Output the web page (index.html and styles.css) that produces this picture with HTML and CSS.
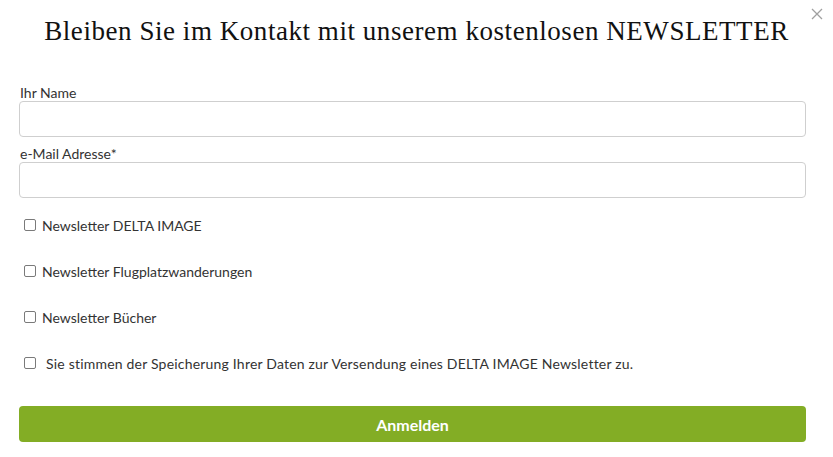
FILE: index.html
```html
<!DOCTYPE html>
<html lang="de">
<head>
<meta charset="utf-8">
<title>Newsletter</title>
<link rel="stylesheet" href="styles.css">
</head>
<body>
<div class="modal">
  <button class="close" type="button" aria-label="Schließen">
    <svg width="12" height="12" viewBox="0 0 12 12"><path d="M1 1L11 11M11 1L1 11" stroke="#a0a0a0" stroke-width="1.3" fill="none"/></svg>
  </button>
  <h1 class="title">Bleiben Sie im Kontakt mit unserem kostenlosen NEWSLETTER</h1>
  <form class="form">
    <div class="field">
      <label class="label" for="name">Ihr Name</label>
      <input class="input" id="name" type="text">
    </div>
    <div class="field">
      <label class="label" for="mail">e-Mail Adresse*</label>
      <input class="input" id="mail" type="email">
    </div>
    <div class="checks">
      <label class="check"><span class="box"></span><span>Newsletter DELTA IMAGE</span></label>
      <label class="check"><span class="box"></span><span>Newsletter Flugplatzwanderungen</span></label>
      <label class="check"><span class="box"></span><span>Newsletter Bücher</span></label>
      <label class="check consent"><span class="box"></span><span>Sie stimmen der Speicherung Ihrer Daten zur Versendung eines DELTA IMAGE Newsletter zu.</span></label>
    </div>
    <button class="submit" type="button">Anmelden</button>
  </form>
</div>
</body>
</html>
```
FILE: styles.css
```css
html, body {
  margin: 0;
  padding: 0;
  background: #fff;
}
.modal {
  position: relative;
  padding: 0 27px 0 19px;
  font-family: Lato, "Liberation Sans", sans-serif;
  color: #333;
}
.close {
  position: absolute;
  top: 7px;
  right: 10px;
  width: 13px;
  height: 13px;
  padding: 0;
  border: 0;
  background: none;
  display: flex;
  align-items: center;
  justify-content: center;
}
.title {
  margin: 0 0 0 8px;
  padding-top: 14px;
  height: 62px;
  box-sizing: border-box;
  font-family: "Liberation Serif", serif;
  font-weight: normal;
  font-size: 27px;
  line-height: 34px;
  color: #111;
  text-align: center;
  letter-spacing: 0.55px;
  white-space: nowrap;
}
.form {
  display: flex;
  flex-direction: column;
}
.field {
  display: flex;
  flex-direction: column;
  margin-top: 23px;
}
.field + .field {
  margin-top: 9px;
}
.label {
  font-size: 14px;
  line-height: 16px;
  height: 16px;
  margin-left: 1px;
  color: #333;
}
.input {
  height: 36px;
  box-sizing: border-box;
  border: 1px solid #cfcfcf;
  border-radius: 4px;
  margin: 0;
  padding: 0 10px;
  font: inherit;
}
.checks {
  display: flex;
  flex-direction: column;
  gap: 26px;
  margin-top: 17px;
}
.check {
  display: flex;
  align-items: center;
  height: 20px;
  padding-left: 5px;
  font-size: 14px;
  color: #333;
}
.box {
  width: 10px;
  height: 10px;
  border: 1.5px solid #7a7a7a;
  border-radius: 2px;
  margin-right: 6px;
  flex: none;
}
.consent .box {
  margin-right: 10px;
}
.consent span:last-child {
  letter-spacing: 0.2px;
}
.submit {
  margin-top: 33px;
  height: 36px;
  border: 0;
  border-radius: 4px;
  background: #83ad25;
  color: #fff;
  font-family: Lato, "Liberation Sans", sans-serif;
  font-weight: bold;
  font-size: 16px;
}
```
